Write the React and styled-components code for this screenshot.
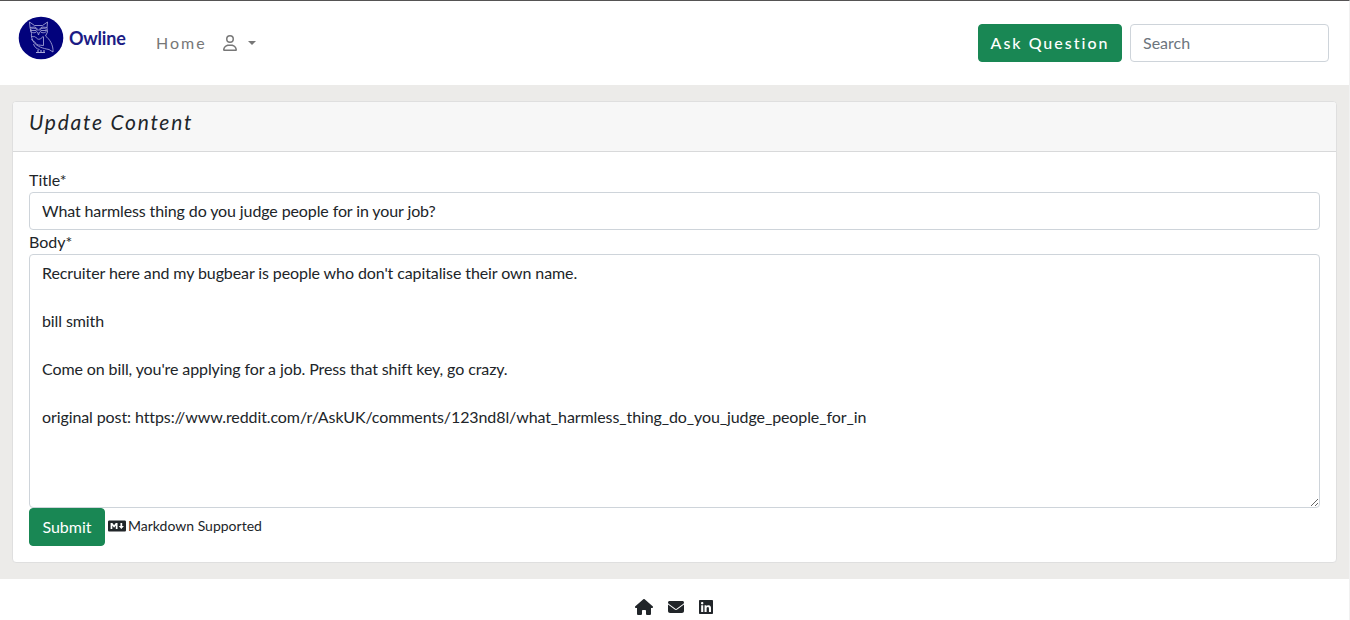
import React from "react";
import styled, { createGlobalStyle } from "styled-components";
import { FaRegUser, FaHouse, FaEnvelope, FaLinkedin, FaMarkdown } from "react-icons/fa6";

const GlobalStyle = createGlobalStyle`
  *, *::before, *::after { box-sizing: border-box; }
  body {
    margin: 0;
    background: #fff;
    color: #212529;
    font-family: Lato, "Liberation Sans", sans-serif;
    font-size: 16px;
    line-height: 24px;
  }
`;

const Page = styled.div`
  height: 620px;
  overflow: hidden;
  display: flex;
  flex-direction: column;
  border-top: 1px solid #555354;
  border-right: 1px solid #f1f1f1;
`;

const Navbar = styled.header`
  height: 84px;
  flex: none;
  display: flex;
  align-items: center;
  padding: 0 20px 0 18px;
`;

const Brand = styled.a`
  display: flex;
  align-items: center;
  gap: 5px;
  width: 138px;
  height: 46px;
  margin-bottom: 10px;
  color: #1c1c85;
  font-size: 18px;
  font-weight: 700;
  letter-spacing: -0.2px;
`;

const NavLink = styled.a`
  display: flex;
  align-items: center;
  gap: 10px;
  margin-right: ${(p) => p.$gap || 0}px;
  color: #777;
  letter-spacing: 2px;
`;

const Caret = styled.span`
  border-top: 4.8px solid;
  border-left: 4.8px solid transparent;
  border-right: 4.8px solid transparent;
`;

const Tools = styled.div`
  display: flex;
  gap: 8px;
  margin-left: auto;
`;

const Button = styled.button`
  height: 38px;
  width: ${(p) => p.$width}px;
  padding: 0;
  border: 1px solid #198754;
  border-radius: 4px;
  background: #198754;
  color: #fff;
  font: inherit;
  letter-spacing: ${(p) => p.$spacing || "normal"};
  font-weight: ${(p) => p.$weight || 400};
`;

const Input = styled.input`
  display: block;
  width: ${(p) => p.$width || "100%"};
  height: 38px;
  padding: 5px 12px 7px;
  border: 1px solid #ced4da;
  border-radius: 4px;
  background: #fff;
  color: #212529;
  font: inherit;
  letter-spacing: ${(p) => p.$spacing || "normal"};
  &::placeholder { color: #6c757d; opacity: 1; }
`;

const TextArea = styled.textarea`
  display: block;
  width: 100%;
  height: 254px;
  padding: 6px 12px;
  border: 1px solid #ced4da;
  border-radius: 4px;
  color: #212529;
  font: inherit;
  letter-spacing: -0.1px;
  resize: vertical;
`;

const Main = styled.main`
  height: 494px;
  flex: none;
  padding: 16px 12px;
  background: #ecebe9;
`;

const Card = styled.section`
  height: 462px;
  border: 1px solid #dfdfdf;
  border-radius: 4px;
  background: #fff;
  overflow: hidden;
`;

const CardHeader = styled.div`
  height: 50px;
  padding: 8px 16px;
  border-bottom: 1px solid #d8d9da;
  background: #f7f7f7;
`;

const Heading = styled.h1`
  margin: 0;
  font-size: 21px;
  line-height: 24px;
  font-style: italic;
  font-weight: 400;
  letter-spacing: 1.75px;
`;

const Form = styled.form`
  padding: 16px;
`;

const Label = styled.label`
  display: block;
  height: 24px;
`;

const Actions = styled.div`
  display: flex;
  gap: 3px;
`;

const Hint = styled.small`
  display: flex;
  align-items: center;
  gap: 2px;
  height: 36px;
  font-size: 14px;
`;

const Footer = styled.footer`
  display: flex;
  justify-content: center;
  align-items: center;
  gap: 15px;
  height: 56px;
  padding-right: 1px;
  flex: none;
`;

const FooterIcon = styled.a`
  display: flex;
  justify-content: center;
  width: ${(p) => p.$width}px;
  svg { flex: none; }
`;

const OwlLogo = () => (
  <svg width="46" height="46" viewBox="0 0 46 46" fill="none" stroke="#a9a9d8" strokeWidth="0.85" strokeLinejoin="round">
    <ellipse cx="23" cy="23" rx="22.3" ry="21.3" fill="#02027c" stroke="none" />
    <path d="M11.5 7l5 3.5h8l5-3.5-.5 6 .5 4-2 4c4 3 8 9 7.500 16l-4-2.500c-6-1-12-3-15-7-2-3-3-6-2.500-9l-1.500-6z" />
    <path d="M12 12.500l5-.5 3.500 3 3.500-3 5 .5M12.500 15.500c0-3 6.500-3 6.500 0s-6.500 3-6.500 0zM22 15.500c0-3 6.500-3 6.500 0s-6.500 3-6.500 0zM13 15.500h5M23 15.500h5M19.500 17l1 3 1-3" />
    <path d="M13.500 21c2 1.500 3 0 4 1s2 3 5 2l3-3M13.500 24c1 3 3 1.500 4 4s4 2 8 2.500V22M15.500 29c1 3 3 5 6 5.500" />
    <path d="M18 37.500h9M20 35v3M23 35v3M26 35v3" strokeWidth="1.1" />
  </svg>
);

const BODY = `Recruiter here and my bugbear is people who don't capitalise their own name.

bill smith

Come on bill, you're applying for a job. Press that shift key, go crazy.

original post: https://www.reddit.com/r/AskUK/comments/123nd8l/what_harmless_thing_do_you_judge_people_for_in`;

export default function App() {
  return (
    <>
      <GlobalStyle />
      <Page>
        <Navbar>
          <Brand><OwlLogo />Owline</Brand>
          <NavLink $gap={15}>Home</NavLink>
          <NavLink><FaRegUser size={16} /><Caret /></NavLink>
          <Tools>
            <Button $width={144} $spacing="2px" $weight={500}>Ask Question</Button>
            <Input $width="199px" placeholder="Search" />
          </Tools>
        </Navbar>
        <Main>
          <Card>
            <CardHeader><Heading>Update Content</Heading></CardHeader>
            <Form>
              <Label htmlFor="title">Title*</Label>
              <Input id="title" $spacing="-0.11px" defaultValue="What harmless thing do you judge people for in your job?" />
              <Label htmlFor="body">Body*</Label>
              <TextArea id="body" spellCheck={false} defaultValue={BODY} />
              <Actions>
                <Button type="button" $width={76}>Submit</Button>
                <Hint><FaMarkdown size={18} />Markdown Supported</Hint>
              </Actions>
            </Form>
          </Card>
        </Main>
        <Footer>
          <FooterIcon $width={18}><FaHouse size={18} /></FooterIcon>
          <FooterIcon $width={16}><FaEnvelope size={16} /></FooterIcon>
          <FooterIcon $width={14}><FaLinkedin size={16} /></FooterIcon>
        </Footer>
      </Page>
    </>
  );
}
